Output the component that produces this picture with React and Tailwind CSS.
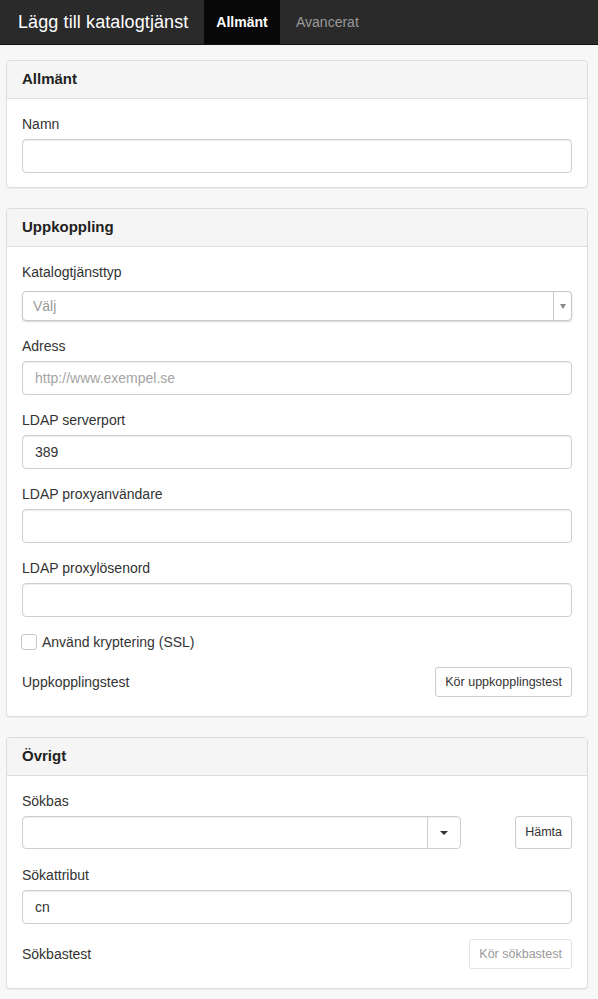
import React from "react";

const Label = ({ children }) => (
  <div className="text-[14px] leading-[20px] text-[#333] mb-[5px]">{children}</div>
);

const TextInput = ({ value, placeholder }) => (
  <div className="h-[34px] rounded-[4px] border border-[#cfcfcf] bg-white px-[12px] flex items-center text-[14px] shadow-[inset_0_1px_1px_rgba(0,0,0,0.075)]">
    {value ? (
      <span className="text-[#333]">{value}</span>
    ) : (
      <span className="text-[#a5a5a5]">{placeholder}</span>
    )}
  </div>
);

const Panel = ({ title, children, className = "" }) => (
  <div className={`mx-[6px] mr-[10px] rounded-[4px] border border-[#dddddd] bg-white shadow-[0_1px_1px_rgba(0,0,0,0.05)] ${className}`}>
    <div className="h-[38px] flex items-center px-[15px] bg-[#f5f5f5] border-b border-[#dddddd] rounded-t-[4px]">
      <h3 className="text-[15px] font-bold text-[#222]">{title}</h3>
    </div>
    <div className="px-[15px] pt-[15px]">{children}</div>
  </div>
);

const Button = ({ children, disabled, className = "" }) => (
  <button
    className={`h-[30px] rounded-[3px] border bg-white px-[9px] text-[12.5px] ${
      disabled ? "border-[#e2e2e2] text-[#9a9a9a]" : "border-[#cccccc] text-[#333]"
    } ${className}`}
  >
    {children}
  </button>
);

export default function App() {
  return (
    <div
      className="min-h-[999px] bg-[#f7f7f7] pb-[10px]"
      style={{ fontFamily: '"Liberation Sans", Arial, sans-serif' }}
    >
      {/* Navbar */}
      <div className="h-[45px] bg-[#2a2a2a] border-b border-[#111] flex items-stretch">
        <div className="pl-[18px] pr-[14px] flex items-center text-white text-[18px] tracking-[0.1px] w-[204px]">
          Lägg till katalogtjänst
        </div>
        <div className="bg-[#080808] w-[76px] flex items-center justify-center text-white text-[14px] font-bold">
          Allmänt
        </div>
        <div className="px-[16px] flex items-center text-[#9a9a9a] text-[14px]">Avancerat</div>
      </div>

      {/* Allmänt */}
      <Panel title="Allmänt" className="mt-[15px]">
        <Label>Namn</Label>
        <TextInput />
        <div className="h-[14px]" />
      </Panel>

      {/* Uppkoppling */}
      <Panel title="Uppkoppling" className="mt-[20px]">
        <Label>Katalogtjänsttyp</Label>
        <div className="mt-[9px] h-[30px] rounded-[4px] border border-[#c8c8c8] bg-white flex shadow-[0_1px_2px_rgba(0,0,0,0.15)]">
          <div className="flex-1 flex items-center px-[10px] text-[14px] text-[#999]">Välj</div>
          <div className="w-[18px] border-l border-[#c8c8c8] flex items-center justify-center">
            <span className="w-0 h-0 border-l-[3px] border-r-[3px] border-t-[5px] border-l-transparent border-r-transparent border-t-[#888]" />
          </div>
        </div>

        <div className="mt-[15px]">
          <Label>Adress</Label>
          <TextInput placeholder="http://www.exempel.se" />
        </div>
        <div className="mt-[15px]">
          <Label>LDAP serverport</Label>
          <TextInput value="389" />
        </div>
        <div className="mt-[15px]">
          <Label>LDAP proxyanvändare</Label>
          <TextInput />
        </div>
        <div className="mt-[15px]">
          <Label>LDAP proxylösenord</Label>
          <TextInput />
        </div>

        <div className="mt-[15px] h-[20px] flex items-center">
          <span className="ml-[-1px] w-[16px] h-[16px] rounded-[3px] border border-[#c8c8c8] bg-white" />
          <span className="ml-[5px] text-[14px] text-[#333]">Använd kryptering (SSL)</span>
        </div>

        <div className="mt-[15px] flex items-center justify-between pb-[19px]">
          <span className="text-[14px] text-[#333]">Uppkopplingstest</span>
          <Button>Kör uppkopplingstest</Button>
        </div>
      </Panel>

      {/* Övrigt */}
      <Panel title="Övrigt" className="mt-[20px]">
        <Label>Sökbas</Label>
        <div className="flex items-center">
          <div className="w-[439px] h-[33px] rounded-[4px] border border-[#cfcfcf] bg-white flex shadow-[inset_0_1px_1px_rgba(0,0,0,0.075)]">
            <div className="flex-1" />
            <div className="w-[33px] border-l border-[#cfcfcf] flex items-center justify-center">
              <span className="w-0 h-0 border-l-[4px] border-r-[4px] border-t-[4px] border-l-transparent border-r-transparent border-t-[#333]" />
            </div>
          </div>
          <div className="flex-1" />
          <Button className="h-[33px] px-[8px]">Hämta</Button>
        </div>

        <div className="mt-[16px]">
          <Label>Sökattribut</Label>
          <TextInput value="cn" />
        </div>

        <div className="mt-[15px] flex items-center justify-between pb-[19px]">
          <span className="text-[14px] text-[#333]">Sökbastest</span>
          <Button disabled>Kör sökbastest</Button>
        </div>
      </Panel>
    </div>
  );
}
